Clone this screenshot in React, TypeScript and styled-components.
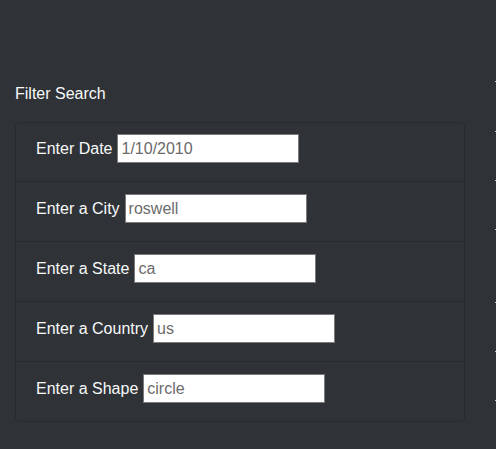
import styled, { createGlobalStyle } from 'styled-components'

const Reset = createGlobalStyle`
  html, body { margin: 0; padding: 0; background: #2f3337; }
  body { font-family: 'Liberation Sans', Arial, sans-serif; }
  * { box-sizing: border-box; }
`

const Page = styled.div`
  display: flex;
  width: 496px;
  height: 449px;
  overflow: hidden;
  background: #2f3337;
`

const Main = styled.div`
  width: 480px;
  flex-shrink: 0;
  padding: 0 15px;
`

const Heading = styled.div`
  margin: 82px 0 16px;
  font-size: 16px;
  line-height: 24px;
  color: #f8f9fa;
`

const Card = styled.div`
  display: flex;
  flex-direction: column;
  border: 1px solid #272a2e;
  border-radius: 4px;
`

const Row = styled.div`
  display: flex;
  align-items: baseline;
  gap: 5px;
  height: 60px;
  padding: 12px 20px 0;
  border-top: 1px solid #272a2e;
  &:first-child {
    border-top: none;
    height: 58px;
    padding-top: 11px;
  }
`

const Label = styled.label`
  font-size: 16px;
  color: #f8f9fa;
`

const Input = styled.input`
  width: 182px;
  height: 29px;
  padding: 0 3px;
  border: 1px solid #7a7a7a;
  background: #fff;
  color: #6b6b6b;
  font-size: 16px;
  font-family: 'Liberation Sans', Arial, sans-serif;
  outline: none;
`

const Side = styled.div`
  display: flex;
  flex-direction: column;
  padding-left: 15px;
`

const Tick = styled.div`
  width: 2px;
  height: 1px;
  background: #c9cbcd;
`

const fields = [
  { label: 'Enter Date', value: '1/10/2010' },
  { label: 'Enter a City', value: 'roswell' },
  { label: 'Enter a State', value: 'ca' },
  { label: 'Enter a Country', value: 'us' },
  { label: 'Enter a Shape', value: 'circle' },
]

const ticks = [81, 131, 180, 229, 302, 351, 400]

export default function App() {
  return (
    <>
      <Reset />
      <Page>
        <Main>
          <Heading>Filter Search</Heading>
          <Card>
            {fields.map((f) => (
              <Row key={f.label}>
                <Label>{f.label}</Label>
                <Input type="text" defaultValue={f.value} />
              </Row>
            ))}
          </Card>
        </Main>
        <Side>
          {ticks.map((y, i) => (
            <Tick key={y} style={{ marginTop: y - (i === 0 ? 0 : ticks[i - 1] + 1) }} />
          ))}
        </Side>
      </Page>
    </>
  )
}
